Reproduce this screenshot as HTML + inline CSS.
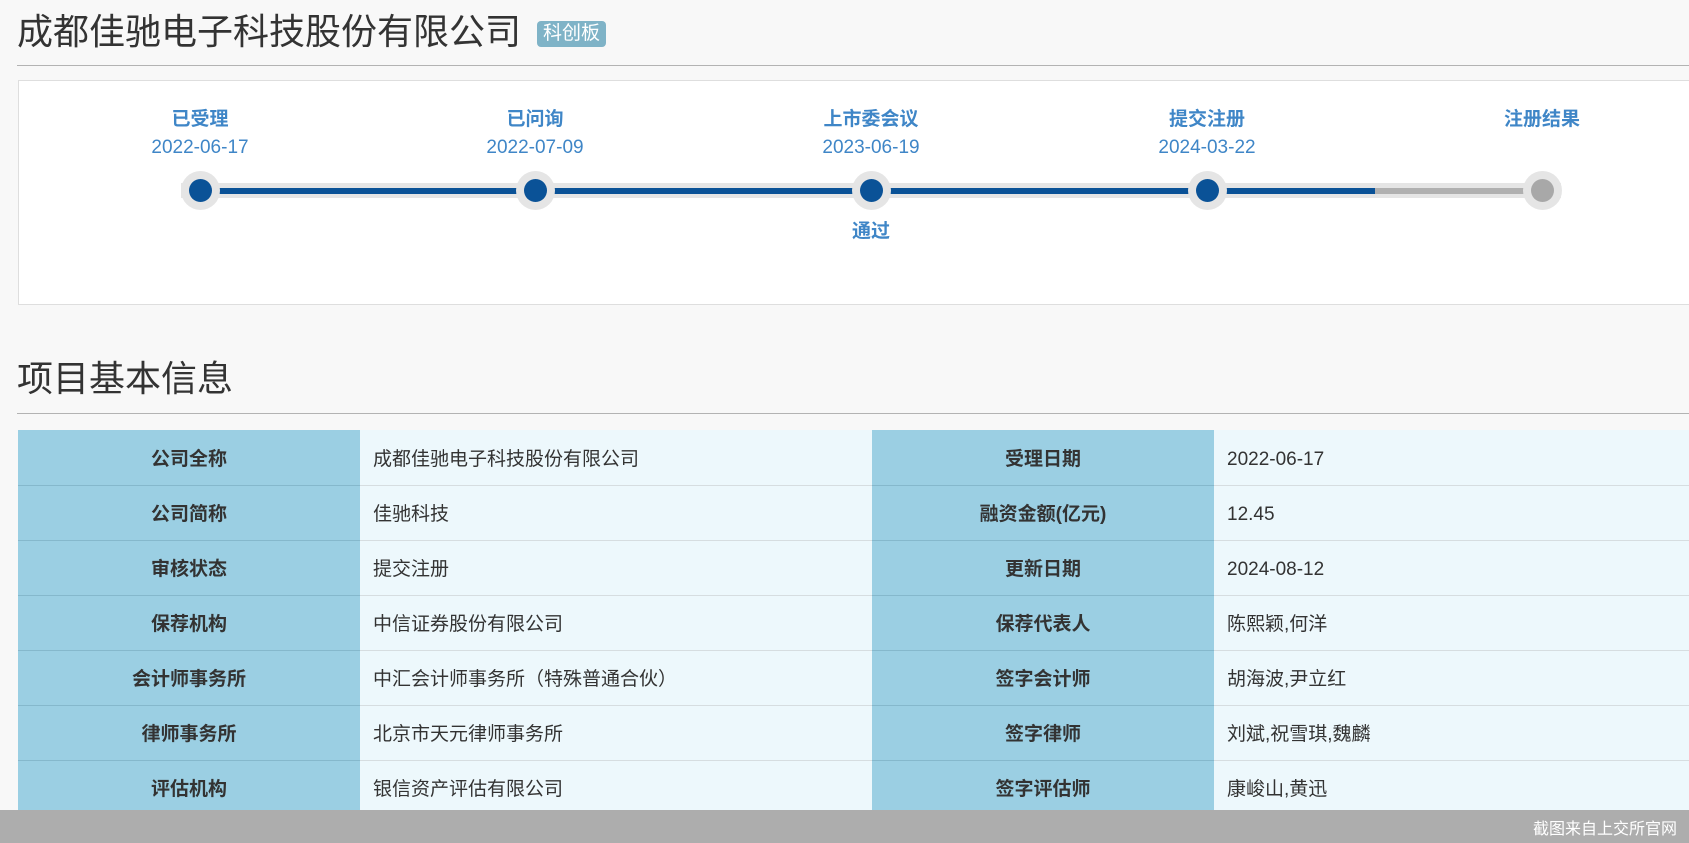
<!DOCTYPE html>
<html><head><meta charset="utf-8"><style>
*{margin:0;padding:0;box-sizing:border-box}
body{width:1689px;height:843px;overflow:hidden;background:#f8f8f8;font-family:"Liberation Sans","Noto Sans CJK SC",sans-serif;position:relative;color:#333}
.h{position:absolute;left:17px;font-size:36px;line-height:46px;color:#333;font-weight:400}
.tag{display:inline-block;background:#7fb3c7;color:#fff;font-size:19px;border-radius:4px;padding:0 6px;line-height:26px;vertical-align:5px;margin-left:16px}
.hr{position:absolute;left:17px;right:0;height:1px;background:#b3b3b3}
.box{position:absolute;left:18px;top:80px;width:1690px;height:225px;background:#fff;border:1px solid #dedede}
.st{position:absolute;width:240px;text-align:center;color:#3f86c7;font-size:19px}
.st b{display:block;font-weight:700;line-height:28px}
.st span{display:block;line-height:28px}
.trk{position:absolute;top:183px;height:15px;background:#e5e5e5}
.ln{position:absolute;top:188px;height:6px}
.nd{position:absolute;top:171px;width:39px;height:39px;border-radius:50%;background:#e5e5e5}
.nd i{position:absolute;left:8px;top:8px;width:23px;height:23px;border-radius:50%;background:#0a5297}
table{position:absolute;left:18px;top:430px;border-collapse:collapse;font-size:19px;table-layout:fixed;width:1714px}
td{height:55px;border-bottom:1px solid #d6dde0}
td.k{background:#9bcfe3;text-align:center;font-weight:700;color:#333;border-bottom-color:#85b8cc}
td.v{background:#edf8fc;padding-left:13px;color:#333}
td.n{padding-top:5px}
.foot{position:absolute;left:0;top:810px;width:1689px;height:33px;background:#adadad}
.foot span{position:absolute;right:12px;top:5px;color:#fff;font-size:16px}
</style></head><body>
<div class="h" style="top:9px">成都佳驰电子科技股份有限公司<span class="tag">科创板</span></div>
<div class="hr" style="top:65px"></div>
<div class="box"></div>
<div class="trk" style="left:181px;width:1380px"></div>
<div class="ln" style="left:200px;width:1175px;background:#0a5297"></div>
<div class="ln" style="left:1375px;width:167px;background:#b0b0b0"></div>
<div class="nd" style="left:181px"><i></i></div>
<div class="nd" style="left:516px"><i></i></div>
<div class="nd" style="left:852px"><i></i></div>
<div class="nd" style="left:1188px"><i></i></div>
<div class="nd" style="left:1523px"><i style="background:#a8a8a8"></i></div>
<div class="st" style="left:80px;top:106px"><b>已受理</b><span>2022-06-17</span></div>
<div class="st" style="left:415px;top:106px"><b>已问询</b><span>2022-07-09</span></div>
<div class="st" style="left:751px;top:106px"><b>上市委会议</b><span>2023-06-19</span></div>
<div class="st" style="left:1087px;top:106px"><b>提交注册</b><span>2024-03-22</span></div>
<div class="st" style="left:1422px;top:106px"><b>注册结果</b></div>
<div class="st" style="left:751px;top:218px"><b>通过</b></div>
<div class="h" style="top:356px">项目基本信息</div>
<div class="hr" style="top:413px"></div>
<table>
<colgroup><col style="width:342px"><col style="width:512px"><col style="width:342px"><col style="width:518px"></colgroup>
<tr><td class="k">公司全称</td><td class="v">成都佳驰电子科技股份有限公司</td><td class="k">受理日期</td><td class="v n">2022-06-17</td></tr>
<tr><td class="k">公司简称</td><td class="v">佳驰科技</td><td class="k">融资金额(亿元)</td><td class="v n">12.45</td></tr>
<tr><td class="k">审核状态</td><td class="v">提交注册</td><td class="k">更新日期</td><td class="v n">2024-08-12</td></tr>
<tr><td class="k">保荐机构</td><td class="v">中信证券股份有限公司</td><td class="k">保荐代表人</td><td class="v">陈熙颖,何洋</td></tr>
<tr><td class="k">会计师事务所</td><td class="v">中汇会计师事务所（特殊普通合伙）</td><td class="k">签字会计师</td><td class="v">胡海波,尹立红</td></tr>
<tr><td class="k">律师事务所</td><td class="v">北京市天元律师事务所</td><td class="k">签字律师</td><td class="v">刘斌,祝雪琪,魏麟</td></tr>
<tr><td class="k">评估机构</td><td class="v">银信资产评估有限公司</td><td class="k">签字评估师</td><td class="v">康峻山,黄迅</td></tr>
</table>
<div class="foot"><span>截图来自上交所官网</span></div>
</body></html>
